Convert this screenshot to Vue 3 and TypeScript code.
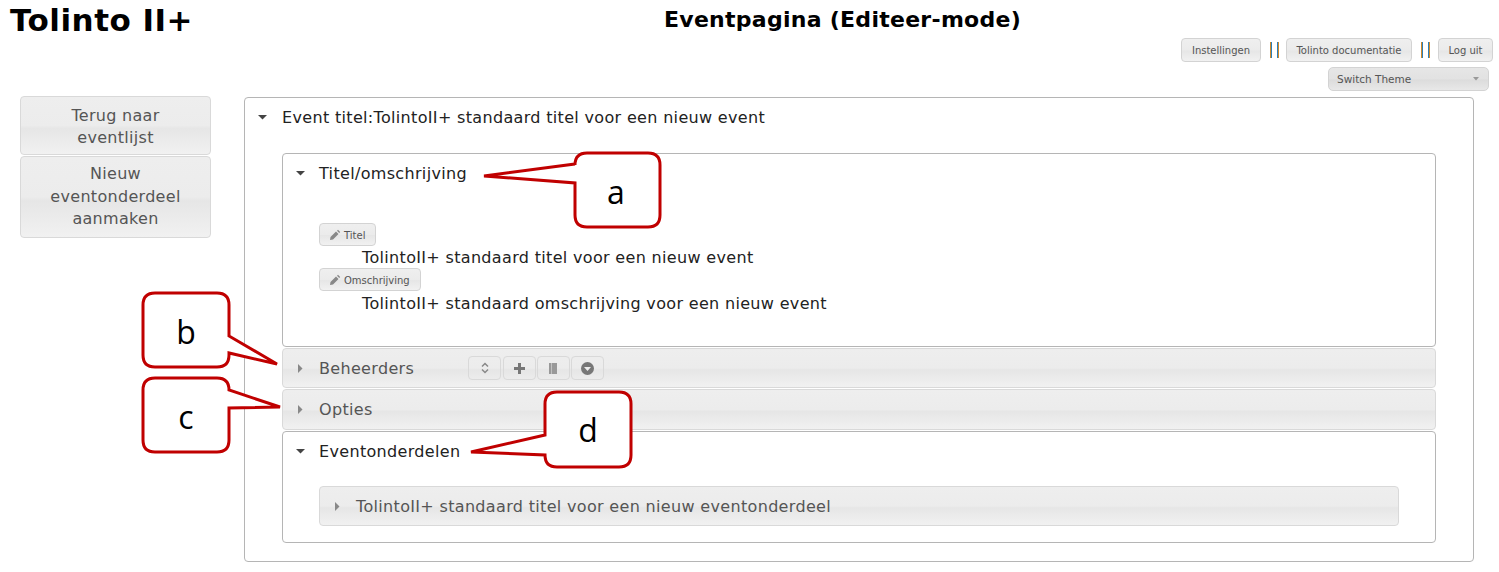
<script setup lang="ts">
const callouts = [
  { label: "a", x: 616, y: 204, d: "M587 153H648Q660 153 660 165V215Q660 227 648 227H587Q575 227 575 215V183L484 176L575 164V165Q575 153 587 153Z" },
  { label: "b", x: 186, y: 344, d: "M155 293H217Q229 293 229 305V336L277 364L229 353V355Q229 367 217 367H155Q143 367 143 355V305Q143 293 155 293Z" },
  { label: "c", x: 186, y: 429, d: "M155 378H217Q229 378 229 390L280 407L229 408V440Q229 452 217 452H155Q143 452 143 440V390Q143 378 155 378Z" },
  { label: "d", x: 588, y: 442, d: "M557 392H619Q631 392 631 404V455Q631 467 619 467H557Q545 467 545 455L471 452L545 435V404Q545 392 557 392Z" },
];
</script>

<template>
  <main class="page">
    <header class="top">
      <h1>Tolinto II+</h1>
      <h2>Eventpagina (Editeer-mode)</h2>
    </header>

    <nav class="links">
      <button type="button" class="btn btn--settings">Instellingen</button>
      <span class="sep"><i></i><i></i></span>
      <button type="button" class="btn btn--docs">Tolinto documentatie</button>
      <span class="sep"><i></i><i></i></span>
      <button type="button" class="btn btn--logout">Log uit</button>
    </nav>
    <div class="theme-row">
      <div class="theme">
        <span>Switch Theme</span>
        <svg width="6" height="4" viewBox="0 0 6 4"><path d="M0 0h6L3 3.5z" fill="#999" /></svg>
      </div>
    </div>

    <div class="body">
      <aside class="side">
        <button type="button" class="grad side-btn">Terug naar eventlijst</button>
        <button type="button" class="grad side-btn">Nieuw eventonderdeel aanmaken</button>
      </aside>

      <section class="outer">
        <div class="head head--outer">
          <svg class="caret" width="9" height="5" viewBox="0 0 9 5"><path d="M0 0h9L4.500 4.500z" fill="#444" /></svg>
          <span>Event titel:TolintoII+ standaard titel voor een nieuw event</span>
        </div>

        <div class="stack">
          <div class="panel panel--first">
            <div class="head">
              <svg class="caret" width="9" height="5" viewBox="0 0 9 5"><path d="M0 0h9L4.500 4.500z" fill="#444" /></svg>
              <span>Titel/omschrijving</span>
            </div>
            <div class="fields">
              <button type="button" class="btn tag">
                <svg width="12" height="12" viewBox="0 0 12 12"><path d="M1 11l.5-3L7 2.500 9.500 5 4 10.500zM8 1.800l1-1 2.200 2.200-1 1z" fill="#888" /></svg>
                Titel
              </button>
              <p>TolintoII+ standaard titel voor een nieuw event</p>
              <button type="button" class="btn tag">
                <svg width="12" height="12" viewBox="0 0 12 12"><path d="M1 11l.5-3L7 2.500 9.500 5 4 10.500zM8 1.800l1-1 2.200 2.200-1 1z" fill="#888" /></svg>
                Omschrijving
              </button>
              <p>TolintoII+ standaard omschrijving voor een nieuw event</p>
            </div>
          </div>

          <div class="grad bar bar--beheer">
            <svg class="caret" width="5" height="9" viewBox="0 0 5 9"><path d="M0 0v9l4.500-4.500z" fill="#888" /></svg>
            <span>Beheerders</span>
            <div class="tools">
              <button type="button" class="tool">
                <svg width="10" height="14" viewBox="0 0 10 14"><path d="M2 5.500L5 2.500 8 5.500M2 8.500L5 11.500 8 8.500" fill="none" stroke="#888" stroke-width="1.500" /></svg>
              </button>
              <button type="button" class="tool">
                <svg width="11" height="11" viewBox="0 0 11 11"><path d="M4 0h3v4h4v3H7v4H4V7H0V4h4z" fill="#777" /></svg>
              </button>
              <button type="button" class="tool">
                <svg width="10" height="11" viewBox="0 0 10 11"><path d="M1 0h2v11H1zM3.500 0H9v11H3.500z" fill="#999" /></svg>
              </button>
              <button type="button" class="tool">
                <svg width="13" height="13" viewBox="0 0 13 13"><circle cx="6.500" cy="6.500" r="6.500" fill="#777" /><path d="M3 5h7L6.500 9z" fill="#eee" /></svg>
              </button>
            </div>
          </div>

          <div class="grad bar bar--opties">
            <svg class="caret" width="5" height="9" viewBox="0 0 5 9"><path d="M0 0v9l4.500-4.500z" fill="#888" /></svg>
            <span>Opties</span>
          </div>

          <div class="panel panel--last">
            <div class="head">
              <svg class="caret" width="9" height="5" viewBox="0 0 9 5"><path d="M0 0h9L4.500 4.500z" fill="#444" /></svg>
              <span>Eventonderdelen</span>
            </div>
            <div class="grad bar bar--part">
              <svg class="caret" width="5" height="9" viewBox="0 0 5 9"><path d="M0 0v9l4.500-4.500z" fill="#888" /></svg>
              <span>TolintoII+ standaard titel voor een nieuw eventonderdeel</span>
            </div>
          </div>
        </div>
      </section>
    </div>

    <svg class="notes" width="1499" height="572" viewBox="0 0 1499 572">
      <g v-for="c in callouts" :key="c.label">
        <path :d="c.d" fill="#fff" stroke="#c00000" stroke-width="3" stroke-linejoin="miter" />
        <text :x="c.x" :y="c.y" text-anchor="middle">{{ c.label }}</text>
      </g>
    </svg>
  </main>
</template>

<style>
html,
body {
  margin: 0;
  background: #fff;
}
</style>

<style scoped>
* {
  box-sizing: border-box;
}

.page {
  position: relative;
  width: 1499px;
  height: 572px;
  overflow: hidden;
  color: #222;
  font-family: "DejaVu Sans", Verdana, sans-serif;
}

.top {
  display: grid;
  grid-template-columns: 1fr;
  height: 38px;
}

.top h1,
.top h2 {
  grid-area: 1 / 1;
  margin: 0;
  color: #000;
  font-weight: 700;
}

.top h1 {
  padding: 2px 0 0 10px;
  font-size: 31px;
  letter-spacing: 0.5px;
  line-height: 36px;
}

.top h2 {
  padding: 6px 0 0 186px;
  font-size: 22px;
  letter-spacing: 0.27px;
  line-height: 27px;
  text-align: center;
}

.links {
  display: flex;
  justify-content: flex-end;
  align-items: center;
  gap: 6px;
  height: 24px;
  padding-right: 6px;
}

.btn {
  height: 24px;
  padding: 0;
  border: 1px solid #d3d3d3;
  border-radius: 4px;
  background: linear-gradient(#efefef, #ebebeb 50%, #e6e6e6 54%, #f1f1f1);
  color: #555;
  font: 10px "DejaVu Sans", Verdana, sans-serif;
}

.btn--settings {
  width: 80px;
}

.btn--docs {
  width: 126px;
}

.btn--logout {
  width: 55px;
}

.sep {
  display: flex;
  gap: 5px;
  width: 9px;
  height: 16px;
  margin: 0 1px 0 3px;
}

.sep + .btn + .sep {
  margin-right: 2px;
}

.sep i {
  width: 2px;
  height: 16px;
  border-right: 1px solid #2d7fb8;
  border-left: 1px solid #d08a2a;
}

.sep i + i {
  border-right-color: #d08a2a;
  border-left-color: #2d7fb8;
}

.theme-row {
  display: flex;
  justify-content: flex-end;
  height: 29px;
  padding: 5px 10px 0 0;
}

.theme {
  display: flex;
  justify-content: space-between;
  align-items: center;
  width: 161px;
  height: 24px;
  padding: 0 9px 1px 8px;
  border: 1px solid #d3d3d3;
  border-radius: 5px;
  background: linear-gradient(#e6e6e6, #e2e2e2 50%, #dcdcdc 54%, #e8e8e8);
  color: #555;
  font-size: 10.500px;
}

.body {
  display: flex;
  align-items: flex-start;
  padding: 6px 0 0 20px;
}

.side {
  display: flex;
  flex-direction: column;
  gap: 1px;
  width: 191px;
  margin-top: -1px;
}

.grad {
  border: 1px solid #d9d9d9;
  border-radius: 4px;
  background: linear-gradient(#eeeeee, #ececec 50%, #e6e6e6 55%, #f1f1f1);
  color: #555;
}

.side-btn {
  padding: 8px 20px 5px;
  font: 16px/22px "DejaVu Sans", Verdana, sans-serif;
  letter-spacing: 0.3px;
}

.side-btn + .side-btn {
  padding: 6px 20px 6px;
  line-height: 22.500px;
}

.outer {
  width: 1230px;
  height: 465px;
  margin-left: 33px;
  border: 1px solid #b5b5b5;
  border-radius: 4px;
  font-size: 16px;
  letter-spacing: 0.33px;
}

.head {
  display: flex;
  align-items: center;
  height: 38px;
  padding-left: 13px;
}

.head--outer {
  color: #222;
}

.caret {
  flex: none;
}

.head .caret {
  margin-right: 14px;
}

.head--outer .caret {
  margin-right: 15px;
}

.stack {
  display: flex;
  flex-direction: column;
  gap: 1px;
  margin: 17px 37px 0;
}

.panel {
  border: 1px solid #b5b5b5;
  border-radius: 4px;
}

.panel--first {
  height: 194px;
}

.panel--last {
  height: 112px;
}

.fields {
  display: flex;
  flex-direction: column;
  align-items: flex-start;
  padding: 31px 0 0 36px;
}

.fields p {
  height: 22px;
  margin: 0;
  padding: 1px 0 0 43px;
  line-height: 22px;
}

.fields p:last-child {
  padding-top: 2px;
}

.tag {
  display: flex;
  align-items: center;
  gap: 3px;
  height: 23px;
  padding: 1px 10px 0 9px;
  letter-spacing: 0;
}

.bar {
  display: flex;
  align-items: center;
  padding-left: 15px;
}

.bar .caret {
  margin-right: 16px;
}

.bar--beheer {
  height: 40px;
}

.bar--opties {
  height: 41px;
}

.bar--part {
  height: 40px;
  margin: 16px 36px 0;
}

.tools {
  display: flex;
  gap: 1.400px;
  margin-left: 54px;
}

.tool {
  display: grid;
  width: 33px;
  height: 24px;
  padding: 0;
  place-items: center;
  border: 1px solid #d9d9d9;
  border-radius: 4px;
  background: transparent;
}

.notes {
  position: absolute;
  top: 0;
  left: 0;
  pointer-events: none;
}

.notes text {
  fill: #000;
  font: 32px "Open Sans", sans-serif;
}
</style>
